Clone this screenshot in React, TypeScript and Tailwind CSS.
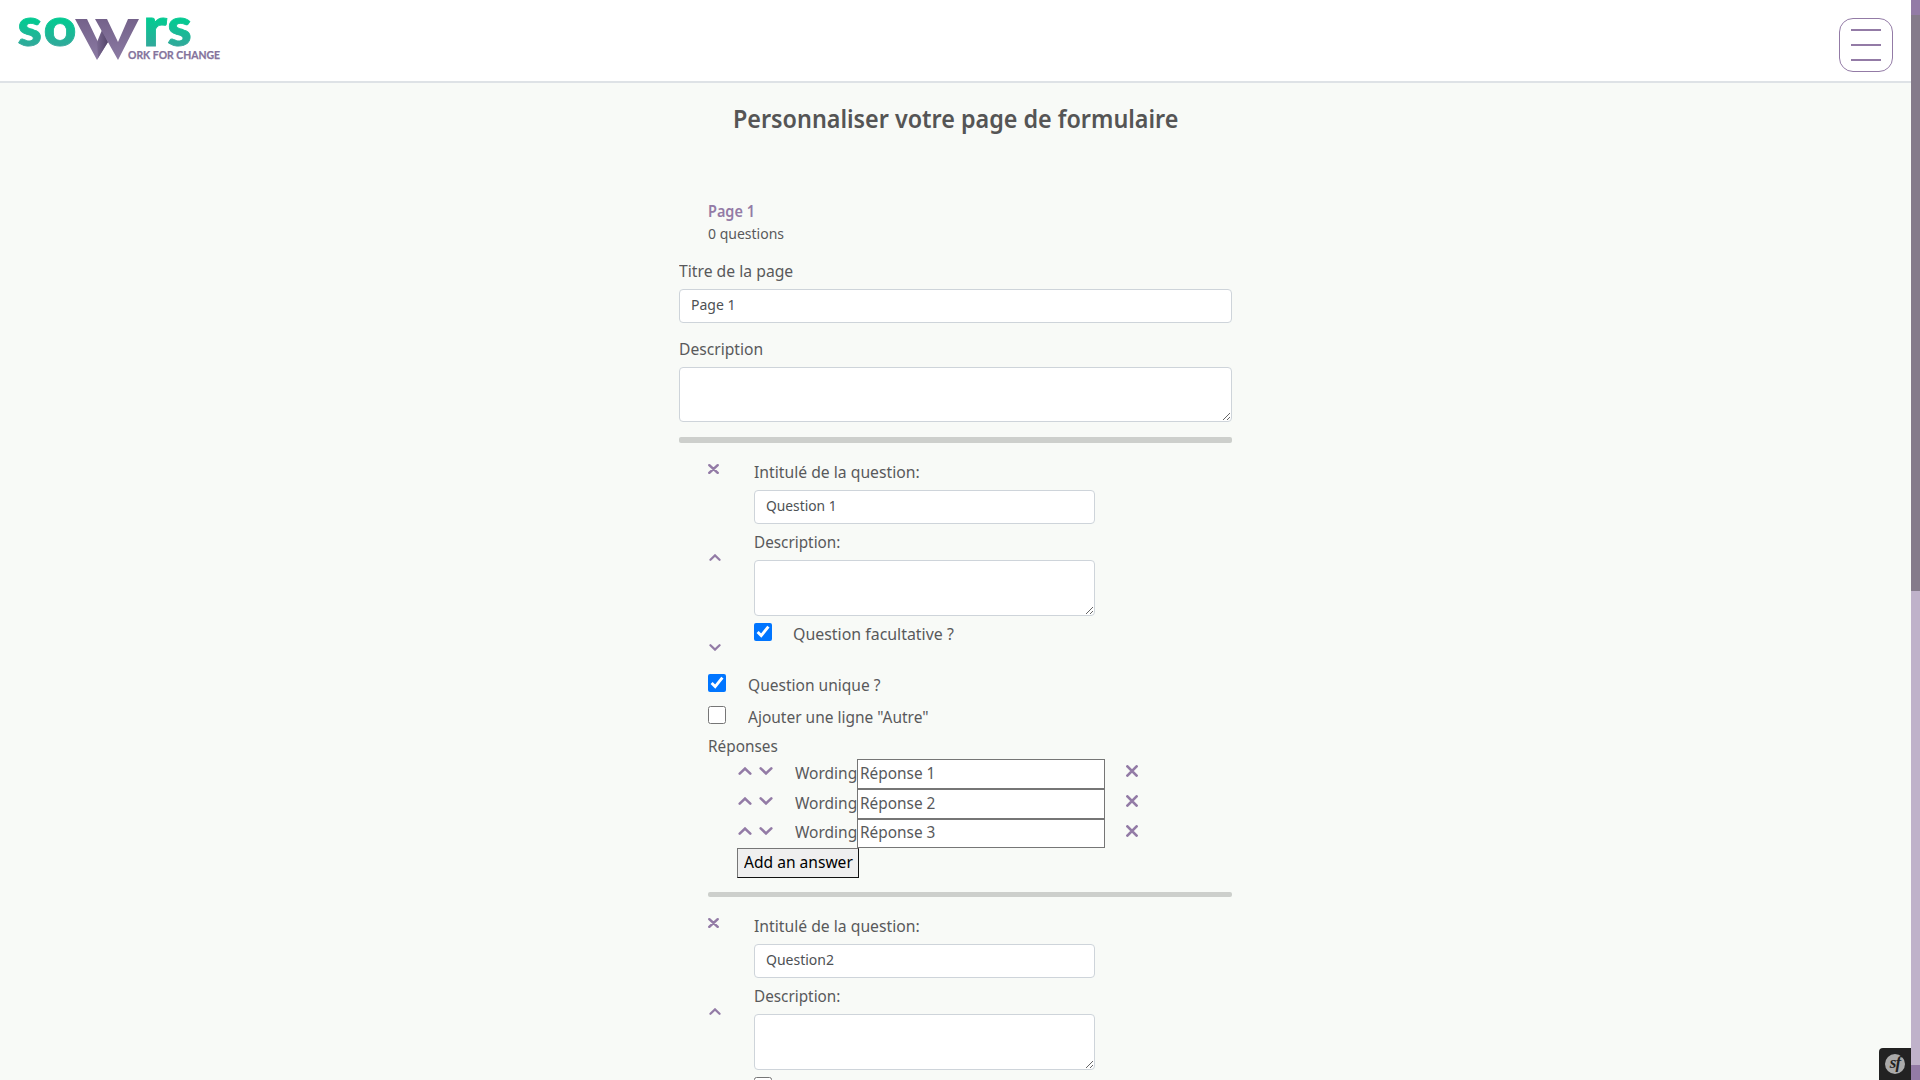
import { useLayoutEffect, useRef, useState } from "react";

/** Text fitted horizontally to a given advance width. */
function T({ w, children, className = "" }: { w: number; children: string; className?: string }) {
  const ref = useRef<HTMLSpanElement>(null);
  const [scale, setScale] = useState(1);
  useLayoutEffect(() => {
    if (ref.current) setScale(w / ref.current.offsetWidth);
  }, [w]);
  return (
    <span className="block shrink-0 overflow-visible" style={{ width: w }}>
      <span
        ref={ref}
        className={`inline-block origin-left align-top whitespace-nowrap ${className}`}
        style={{ transform: `scaleX(${scale})` }}
      >
        {children}
      </span>
    </span>
  );
}

function Cross({ className }: { className: string }) {
  return (
    <svg viewBox="0 0 12 12" preserveAspectRatio="none" className={className}>
      <path d="M1.4 1.4 10.6 10.6M10.6 1.4 1.4 10.6" stroke="#937ba6" strokeWidth="2.7" strokeLinecap="round" fill="none" />
    </svg>
  );
}

function Chevron({ className }: { className: string }) {
  return (
    <svg viewBox="0 0 14 8" preserveAspectRatio="none" className={className}>
      <path d="M1.7 6.6 7 1.6 12.3 6.6" stroke="#937ba6" strokeWidth="2.6" strokeLinecap="round" fill="none" />
    </svg>
  );
}

function Logo() {
  return (
    <svg width="240" height="80" viewBox="0 0 240 80" className="block">
      <defs>
        <linearGradient id="green" gradientUnits="userSpaceOnUse" x1="0" y1="18" x2="0" y2="47">
          <stop offset="0.1" stopColor="#05c992" />
          <stop offset="1" stopColor="#33a79b" />
        </linearGradient>
        <linearGradient id="violet" gradientUnits="userSpaceOnUse" x1="0" y1="19" x2="0" y2="60">
          <stop offset="0" stopColor="#74628a" />
          <stop offset="1" stopColor="#8b7aa3" />
        </linearGradient>
        <linearGradient id="fold" x1="0" y1="0" x2="1" y2="0">
          <stop offset="0" stopColor="#7a6991" />
          <stop offset="1" stopColor="#54456a" />
        </linearGradient>
      </defs>
      <g fill="url(#green)" stroke="url(#green)" strokeWidth="0.8" fontFamily="Lato" fontWeight="900" fontSize="53">
        <text x="17.5" y="46.4" textLength="24.5" lengthAdjust="spacingAndGlyphs">s</text>
        <text x="43.5" y="46.4" textLength="33" lengthAdjust="spacingAndGlyphs">o</text>
        <text x="143" y="46.4" textLength="24" lengthAdjust="spacingAndGlyphs">r</text>
        <text x="167.3" y="46.4" textLength="24.5" lengthAdjust="spacingAndGlyphs">s</text>
      </g>
      <path d="M75 19H87L98 42 103 31 108 42 97 60Z" fill="url(#violet)" />
      <path d="M102 30 108 42 98 58 97 42Z" fill="url(#fold)" />
      <path d="M95 19H107L118 42 128 19H139L118 60Z" fill="url(#violet)" />
      <text x="128" y="59" textLength="92" lengthAdjust="spacing" fill="#84739c" fontFamily="Lato" fontWeight="700" fontSize="10.4" stroke="#84739c" strokeWidth="0.25">
        ORK FOR CHANGE
      </text>
    </svg>
  );
}

function Field({ text, w }: { text: string; w: number }) {
  return (
    <div className="flex h-[34px] items-start rounded-[4px] border border-[#ced4da] bg-white pt-[4px] pl-[11px] text-sm leading-[21px] text-[#4d5154]">
      <T w={w}>{text}</T>
    </div>
  );
}

function Area({ className }: { className: string }) {
  return <textarea className={`block w-full resize rounded-[4px] border border-[#ced4da] bg-white ${className}`} />;
}

function Check({ checked }: { checked: boolean }) {
  return <input type="checkbox" defaultChecked={checked} className="mt-px size-[18px] shrink-0" />;
}

function Question({ title, w, checked }: { title: string; w: number; checked: boolean }) {
  return (
    <div className="flex h-[208px] pt-[17px] pl-[29px]">
      <div className="flex w-[46px] flex-col pt-1">
        <Cross className="h-[10px] w-[11px]" />
        <Chevron className="mt-20 ml-px h-[7px] w-[12px]" />
        <Chevron className="mt-[83px] ml-px h-[7px] w-[12px] rotate-180" />
      </div>
      <div className="w-[341px]">
        <T w={166}>Intitulé de la question:</T>
        <div className="mt-[6px]"><Field text={title} w={w} /></div>
        <div className="mt-[6px] mb-[6px]"><T w={86}>Description:</T></div>
        <Area className="h-[56px]" />
        <div className="mt-[6px] flex gap-[21px]">
          <Check checked={checked} />
          <T w={161}>Question facultative ?</T>
        </div>
      </div>
    </div>
  );
}

const answers = [
  { text: "Réponse 1", box: "h-[30px]", pad: "pt-[2px]", inner: "pt-[1px]" },
  { text: "Réponse 2", box: "h-[30px]", pad: "pt-[2px]", inner: "pt-[1px]" },
  { text: "Réponse 3", box: "h-[29px]", pad: "pt-[1px]", inner: "pt-0" },
];

export default function App() {
  return (
    <div className="flex h-[1080px] w-[1920px] overflow-hidden bg-[#f8faf7] font-['Noto_Sans',sans-serif] text-base leading-6 text-[#58595b]">
      <div className="relative w-[1911px] shrink-0 overflow-hidden">
        <header className="flex h-[83px] items-start justify-between border-b-2 border-[#dee2e6] bg-white pr-[18px]">
          <Logo />
          <button className="mt-[18px] flex size-[54px] flex-col items-center gap-[13px] rounded-[14px] border border-[#937ba6] pt-[10px]">
            <span className="h-[2px] w-[30px] bg-[#937ba6]" />
            <span className="h-[2px] w-[30px] bg-[#937ba6]" />
            <span className="h-[2px] w-[30px] bg-[#937ba6]" />
          </button>
        </header>
        <main className="ml-[679px] w-[553px]">
          <h1 className="flex justify-center pt-[19px] text-[26px] leading-8 font-semibold text-[#555]">
            <T w={445}>Personnaliser votre page de formulaire</T>
          </h1>
          <div className="mt-[65px] pl-[29px]">
            <div className="font-semibold text-[#937ba6]"><T w={47}>Page 1</T></div>
            <div className="text-sm leading-[21px]"><T w={76}>0 questions</T></div>
          </div>
          <div className="mt-[15px]"><T w={114}>Titre de la page</T></div>
          <div className="mt-[6px]"><Field text="Page 1" w={44} /></div>
          <div className="mt-[14px] mb-[6px]"><T w={84}>Description</T></div>
          <Area className="h-[55px]" />
          <div className="mt-[15px] h-[6px] rounded-[2px] bg-[#cdcfcc]" />

          <Question title="Question 1" w={71} checked />

          <div className="mt-[22px] ml-[29px]">
            <div className="flex h-8 gap-[22px]"><Check checked /><T w={132}>Question unique ?</T></div>
            <div className="flex h-[29px] gap-[22px]"><Check checked={false} /><T w={181}>Ajouter une ligne "Autre"</T></div>
            <T w={70}>Réponses</T>
            <div className="mt-px ml-[29px]">
              {answers.map((a) => (
                <div key={a.text} className={`flex ${a.box}`}>
                  <Chevron className="mt-2 ml-px h-2 w-[14px]" />
                  <Chevron className="mt-2 ml-[7px] h-2 w-[14px] rotate-180" />
                  <div className={`ml-[22px] ${a.pad}`}><T w={62}>Wording</T></div>
                  <div className={`h-full w-[248px] border border-[#767676] bg-white pl-[2px] ${a.inner}`}>
                    <T w={75}>{a.text}</T>
                  </div>
                  <Cross className="mt-[6px] ml-[21px] size-3" />
                </div>
              ))}
              <button className="flex h-[30px] w-[122px] items-start border border-t-[#767676] border-r-[#111] border-b-[#111] border-l-[#767676] bg-[#efefef] pt-px pl-[6px] text-left text-black">
                <T w={109}>Add an answer</T>
              </button>
            </div>
            <div className="mt-[14px] h-[5px] rounded-[2px] bg-[#cdcfcc]" />
          </div>

          <Question title="Question2" w={68} checked={false} />
        </main>
        <div className="absolute right-0 bottom-0 flex size-8 items-center justify-center rounded-tl-[4px] bg-[#222]">
          <span className="flex size-5 items-center justify-center rounded-full bg-[#aaa] pb-[3px] font-['Liberation_Serif',serif] text-[17px] leading-none font-bold tracking-[-1px] text-[#222] italic">sf</span>
        </div>
      </div>
      <div className="flex w-[9px] flex-col bg-[#bfb2ca]">
        <div className="h-[15px] bg-[#937ba6]" />
        <div className="h-[576px] bg-[#857b8b]" />
        <div className="mt-auto h-[15px] bg-[#937ba6]" />
      </div>
    </div>
  );
}
